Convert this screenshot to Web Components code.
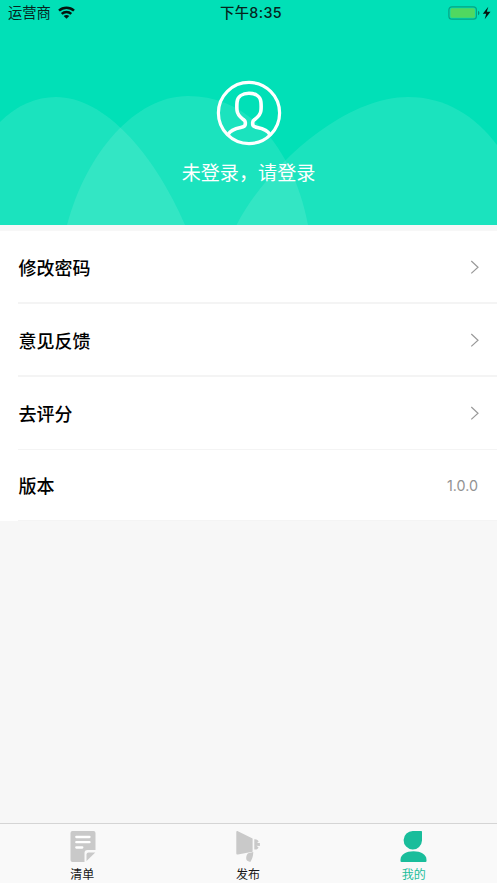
<!DOCTYPE html>
<html lang="zh-CN">
<head>
<meta charset="utf-8">
<title>我的</title>
<style>
html,body{margin:0;height:100%}
body{font-family:Inter,"Noto Sans CJK SC",sans-serif;background:#f7f7f7;color:#000;overflow:hidden}
</style>
</head>
<body>
<profile-page></profile-page>
<script>
const define = (name, html) => customElements.define(name, class extends HTMLElement {
  constructor() {
    super();
    const t = document.createElement('template');
    t.innerHTML = html;
    this.attachShadow({mode: 'open'}).append(t.content.cloneNode(true));
  }
});

define('status-bar', `
<style>
:host{display:grid;grid-template-columns:1fr auto 1fr;align-items:center;height:26px;padding:0 6px 0 8px;font-size:14.3px;line-height:26px;color:#06241d}
.left{display:flex;align-items:center;gap:7px}
.right{display:flex;justify-content:flex-end;align-items:center}
.time{font-weight:500;letter-spacing:.35px;padding-left:3px}
svg{display:block}
.wifi{margin-bottom:2px}
</style>
<div class="left"><span>运营商</span>
<svg class="wifi" width="17" height="13" viewBox="0 0 17 13" fill="none" stroke="#06150f" stroke-width="2.500"><path d="M1 4.700C5.200.8 11.800.8 16 4.700M3.700 7.800c2.700-2.500 6.900-2.500 9.600 0"/><path d="M8.500 12.700 5.700 10c1.600-1.400 4-1.400 5.600 0z" fill="#06150f" stroke="none"/></svg></div>
<span class="time">下午8:35</span>
<div class="right"><svg width="43" height="14" viewBox="0 0 43 14"><rect x=".9" y=".8" width="27.500" height="12.400" rx="3" fill="none" stroke="#07a383" stroke-width="1.200"/><rect x="2.400" y="2.300" width="24.500" height="9.400" rx="1.500" fill="#50d860"/><path d="M30 4.800c2 .8 2 3.600 0 4.400z" fill="#078f70"/><path d="m40.300.8-5.500 7h3.400l-1.500 5.500 5.800-7.500h-3.700z" fill="#06150f"/></svg></div>`);

define('profile-header', `
<style>
:host{display:grid;height:225px;background:#01e0b7;color:#fff}
.waves,.content{grid-area:1/1}
.waves{display:block}
.content{display:flex;flex-direction:column}
.user{display:flex;flex-direction:column;align-items:center;padding-top:54px}
.name{font-size:19.1px;line-height:28px;margin-top:13px}
</style>
<svg class="waves" width="497" height="225" viewBox="0 0 497 225" fill="#fff" fill-opacity=".107">
<path d="M0 122C17 105 36 97 56 97c49 0 98 57 129 128H0z"/>
<path d="M67 225C86 153 135 96 188 96c67 0 107 61 120 129z"/>
<path d="M236.500 225C265 169 342 97 408 97c38 0 67 19 89 48v80z"/>
</svg>
<div class="content"><status-bar></status-bar>
<div class="user">
<svg width="66" height="66" viewBox="0 0 66 66" fill="none" stroke="#fff"><circle cx="33" cy="33" r="30.600" stroke-width="3.200"/><path d="M12.200 54.500c2.300-4.500 7.500-6 12.500-7 2.700-.5 4.600-1.300 4.600-3.300v-2c0-1.400-1.100-2-2.500-3.100-3-2.300-5.200-4.200-5.700-8.200-.3-2.500-.3-6.400 0-9.100C21.600 16.600 26.300 13.300 33 13.300s11.400 3.300 11.900 8.500c.3 2.700.3 6.600 0 9.100-.5 4-2.700 5.900-5.700 8.200-1.400 1.100-2.500 1.700-2.500 3.100v2c0 2 1.900 2.800 4.600 3.300 5 1 10.200 2.500 12.500 7" stroke-width="3.600"/></svg>
<span class="name"><slot></slot></span></div></div>`);

define('menu-row', `
<style>
:host{display:flex;justify-content:space-between;align-items:center;box-sizing:border-box;height:73px;padding:0 18px 2px;background:#fff linear-gradient(#f4f4f4,#f4f4f4) 18px 100%/100% var(--line,2px) no-repeat;font-size:18px;font-weight:500}
.label{padding-left:.5px}
.end{font-size:14.3px;font-weight:400;color:#929292;margin-right:1px;padding-top:1px}
svg{display:block;margin-right:-1px}
</style>
<span class="label"><slot></slot></span><span class="end"><slot name="end"><svg width="9" height="14" viewBox="0 0 9 14" fill="none" stroke="#999" stroke-width="1.200"><path d="m1.300 1 6.700 6.200-6.700 6.200"/></svg></slot></span>`);

define('tab-item', `
<style>
:host{display:flex;flex-direction:column;align-items:center;font-size:12px;line-height:17px;color:var(--tab,#171717)}
.icon{height:32px;display:block}
.label{margin-top:4px;padding-right:1px}
</style>
<span class="icon"><slot name="icon"></slot></span><span class="label"><slot></slot></span>`);

define('tab-bar', `
<style>
:host{display:grid;grid-template-columns:repeat(3,1fr);box-sizing:border-box;height:60px;padding-top:6px;border-top:1px solid #d5d5d5;background:#f9f9f9}
svg{display:block}
</style>
<tab-item><svg slot="icon" width="28" height="32" viewBox="0 0 28 32"><path d="M3.500 1h21a2 2 0 0 1 2 2v17h-8a3 3 0 0 0-3 3v9h-12a2 2 0 0 1-2-2V3a2 2 0 0 1 2-2z" fill="#c9c9c9"/><path d="M17.500 24.500a2 2 0 0 1 2-2h6.800L17.500 31z" fill="#c9c9c9"/><path d="M7.300 7h13.200M7.300 12.200h13.200M7.300 17.500h6" stroke="#fff" stroke-width="2.300" stroke-linecap="round"/></svg>清单</tab-item>
<tab-item><svg slot="icon" width="28" height="32" viewBox="0 0 28 32" fill="#c9c9c9"><path d="M2.300 2.100c0-1.100.7-1.400 1.600-.9L18.600 8.500v13.300L3.900 24.500c-1 .2-1.600-.2-1.600-1.200z"/><path d="M20.300 9.200c2.200-.3 4 .7 4.300 2.500l-1.600 1.200 2.900.1v3l-3.400-.2 2.100 1.700c-.6 1.500-2.100 2.300-4.300 2z"/><path d="M14.200 23.200 19.300 22c-.2 4.100-1 7.300-3 9.900-3.100-.7-4.400-2-4.100-4.500.2-1.800.8-3.100 2-4.200z"/></svg>发布</tab-item>
<tab-item style="--tab:#19bd9b"><svg slot="icon" width="28" height="32" viewBox="0 0 28 32" fill="#19bd9b"><path d="M13 1h8c.6 0 1 .4 1 1v8.500A9.200 9.200 0 1 1 13 1z"/><path d="M.5 31v-1.300C.5 24.600 6.300 21.300 13.500 21.300s13 3.300 13 8.400V31q0 1-1 1h-24q-1 0-1-1z"/></svg>我的</tab-item>`);

define('profile-page', `
<style>
:host{display:flex;flex-direction:column;height:883px;background:#f7f7f7}
.menu{display:flex;flex-direction:column;margin-top:6px}
.space{flex:1}
.version{height:71px;--line:1px}
</style>
<profile-header>未登录，请登录</profile-header>
<div class="menu"><menu-row>修改密码</menu-row><menu-row>意见反馈</menu-row><menu-row style="--line:1px">去评分</menu-row><menu-row class="version">版本<span slot="end">1.0.0</span></menu-row></div>
<div class="space"></div><tab-bar></tab-bar>`);
</script>
</body>
</html>
